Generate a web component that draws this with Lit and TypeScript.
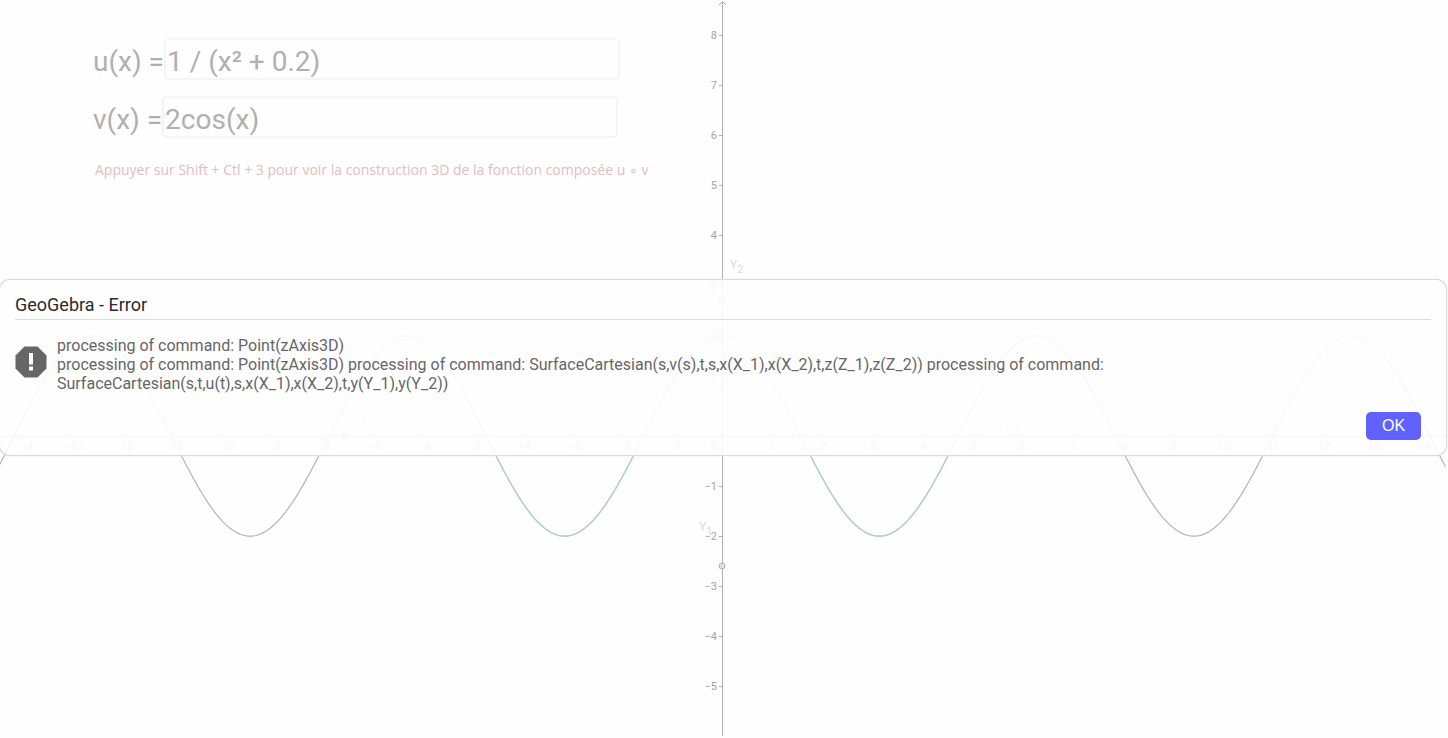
import { LitElement, html, svg, css } from "lit";
import { customElement, state } from "lit/decorators.js";

const WIDTH = 1448;
const HEIGHT = 738;
const ORIGIN_X = 722;
const ORIGIN_Y = 436;
const UNIT = 50.07;

const px = (x: number) => ORIGIN_X + x * UNIT;
const py = (y: number) => ORIGIN_Y - y * UNIT;

/** Samples f between two abscissas and returns an SVG path. */
function trace(f: (x: number) => number, from: number, to: number): string {
  const steps = Math.ceil((to - from) * 25);
  const points: string[] = [];
  for (let i = 0; i <= steps; i++) {
    const x = from + ((to - from) * i) / steps;
    points.push(`${px(x).toFixed(2)} ${py(f(x)).toFixed(2)}`);
  }
  return "M" + points.join("L");
}

const label = (n: number) => (n < 0 ? `−${-n}` : `${n}`);
const range = (from: number, to: number) =>
  Array.from({ length: to - from + 1 }, (_, i) => from + i);

@customElement("graph-plane")
export class GraphPlane extends LitElement {
  static styles = css`
    :host {
      display: block;
    }
    .plane {
      display: block;
      width: 100%;
      height: 100%;
      font-family: Roboto, sans-serif;
    }
    .axis {
      stroke: #b0b0b0;
      fill: none;
      shape-rendering: crispEdges;
    }
    .arrow {
      stroke: #b0b0b0;
      fill: none;
    }
    .tick {
      font-size: 11px;
      fill: #a4a4a4;
    }
    .curve {
      fill: none;
      stroke: #b4b4b4;
      stroke-width: 1.2;
    }
    .restricted {
      fill: none;
      stroke: #aed2d8;
      stroke-width: 1.2;
    }
    .point {
      fill: #dedede;
      stroke: #b0b0b0;
    }
    .name {
      font-size: 12px;
      fill: #dcdcdc;
    }
  `;

  render() {
    const f = (x: number) => 2 * Math.cos(x);
    const names = [
      { letter: "Y", index: "2", x: 730, y: 269 },
      { letter: "Y", index: "1", x: 699, y: 531 },
      { letter: "X", index: "1", x: 353, y: 423 },
      { letter: "X", index: "2", x: 1005, y: 432 },
    ];
    const points = [
      [722, 301],
      [722, 566],
      [345, 436],
      [980.5, 436],
    ];
    return html`
      <svg class="plane" viewBox="0 0 ${WIDTH} ${HEIGHT}" preserveAspectRatio="xMidYMid slice" aria-hidden="true">
        <path class="axis" d="M722.5 2V736M0 436.5H1446" />
        <path class="arrow" d="M719 5L722.5 1.5L726 5M1442 433L1445.5 436.5L1442 440" />
        ${range(-5, 8)
          .filter((n) => n !== 0)
          .map(
            (n) => svg`
              <path class="axis" d="M719 ${Math.floor(py(n)) + 0.5}H722" />
              <text class="tick" x="717" y=${Math.floor(py(n)) + 4} text-anchor="end">${label(n)}</text>`
          )}
        ${range(-14, 14).map(
          (n) => svg`
            ${n === 0 ? "" : svg`<path class="axis" d="M${Math.round(px(n)) + 0.5} 437V440" />`}
            <text class="tick" x=${n === 0 ? 714 : Math.round(px(n)) + (n < 0 ? 3 : 1)} y="450" text-anchor="middle">${label(n)}</text>`
        )}
        <path class="curve" d=${trace(f, -14.43, 14.45)} />
        <path class="restricted" d=${trace(f, -7.54, 5.15)} />
        ${points.map(([x, y]) => svg`<circle class="point" cx=${x} cy=${y} r="3" />`)}
        ${names.map(
          (n) => svg`<text class="name" x=${n.x} y=${n.y}>${n.letter}<tspan dy="4" font-size="11">${n.index}</tspan></text>`
        )}
      </svg>
    `;
  }
}

@customElement("function-form")
export class FunctionForm extends LitElement {
  static styles = css`
    :host {
      display: block;
      font-family: Roboto, sans-serif;
      color: #b0b0b0;
    }
    .form {
      display: flex;
      flex-direction: column;
      gap: 16px;
      padding: 38px 16px 0 93px;
    }
    .row {
      display: flex;
      align-items: flex-start;
      height: 42px;
      font-size: 28px;
      line-height: 36px;
    }
    .label {
      padding-top: 6px;
    }
    .field {
      box-sizing: border-box;
      width: 456px;
      height: 42px;
      padding: 5px 1px 0;
      border: 2px solid #f4f4f4;
      border-radius: 5px;
      outline: none;
      background: transparent;
      font: inherit;
      color: inherit;
    }
    .hint {
      margin: 6px 0 0 2px;
      font: 14px/20px "Open Sans", sans-serif;
      color: #dfbfc1;
    }
  `;

  render() {
    return html`
      <form class="form">
        <div class="row">
          <label class="label" for="u">u(x) =</label>
          <input class="field" id="u" type="text" value="1 / (x² + 0.2)" />
        </div>
        <div class="row">
          <label class="label" for="v">v(x) =</label>
          <input class="field" id="v" type="text" value="2cos(x)" />
        </div>
        <p class="hint">
          Appuyer sur Shift + Ctl + 3 pour voir la construction 3D de la fonction composée u ∘ v
        </p>
      </form>
    `;
  }
}

@customElement("error-dialog")
export class ErrorDialog extends LitElement {
  static styles = css`
    :host {
      display: block;
      font-family: Roboto, sans-serif;
    }
    .dialog {
      position: static;
      box-sizing: border-box;
      width: 100%;
      max-width: none;
      margin: 0;
      padding: 15px;
      border: 0;
      border-radius: 10px;
      background: rgba(254, 254, 254, 0.9);
      box-shadow: 0 0 0 1px #dadada, 0 0 2px 1px #e4e4e4;
    }
    .title {
      margin: 0;
      padding-bottom: 4px;
      border-bottom: 1px solid #dcdcdc;
      font-size: 18px;
      line-height: 20px;
      font-weight: 400;
      color: #2b2b2b;
    }
    .body {
      display: flex;
      gap: 10px;
      margin-top: 16px;
    }
    .icon {
      flex: none;
      width: 32px;
      height: 32px;
      margin-top: 10px;
    }
    .message {
      margin: 0;
      font-size: 16px;
      line-height: 19px;
      color: #666;
    }
    .actions {
      display: flex;
      justify-content: flex-end;
      padding: 19px 10px 0 0;
    }
    .ok {
      width: 55px;
      height: 28px;
      padding: 0;
      border: 0;
      border-radius: 5px;
      background: #6161ff;
      color: #fff;
      font: 16px/28px "Liberation Sans", sans-serif;
      cursor: pointer;
    }
  `;

  private close() {
    this.dispatchEvent(new CustomEvent("dismiss"));
  }

  render() {
    return html`
      <dialog class="dialog" open aria-labelledby="title">
        <h1 class="title" id="title">GeoGebra - Error</h1>
        <div class="body">
          <svg class="icon" viewBox="0 0 32 32" aria-hidden="true">
            <path fill="#666" d="M9.5 0.5h13L31.5 9.5v13L22.5 31.5h-13L0.5 22.5v-13z" />
            <path fill="#fff" d="M14 7h4v11.5h-4zM14 20.5h4v4h-4z" />
          </svg>
          <p class="message">
            processing of command: Point(zAxis3D)<br />
            processing of command: Point(zAxis3D) processing of command:
            SurfaceCartesian(s,v(s),t,s,x(X_1),x(X_2),t,z(Z_1),z(Z_2)) processing of command:
            SurfaceCartesian(s,t,u(t),s,x(X_1),x(X_2),t,y(Y_1),y(Y_2))
          </p>
        </div>
        <div class="actions">
          <button class="ok" type="button" @click=${this.close}>OK</button>
        </div>
      </dialog>
    `;
  }
}

@customElement("app-root")
export class AppRoot extends LitElement {
  static styles = css`
    :host {
      display: block;
      position: relative;
      min-height: 100vh;
      overflow: hidden;
      background: #fefefe;
    }
    .backdrop {
      position: absolute;
      inset: 0;
    }
    .form {
      position: relative;
    }
    .overlay {
      position: absolute;
      inset: 0;
      display: grid;
      align-items: center;
      padding: 0 2px 3px 0;
    }
  `;

  @state() private showError = true;

  render() {
    return html`
      <graph-plane class="backdrop"></graph-plane>
      <function-form class="form"></function-form>
      ${this.showError
        ? html`<div class="overlay">
            <error-dialog @dismiss=${() => (this.showError = false)}></error-dialog>
          </div>`
        : ""}
    `;
  }
}
